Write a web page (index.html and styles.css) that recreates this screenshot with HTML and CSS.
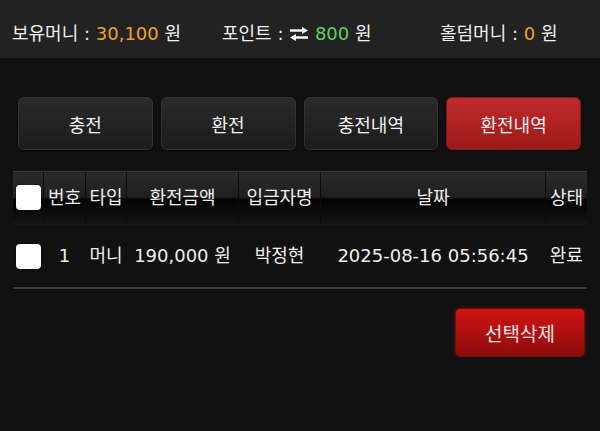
FILE: index.html
```html
<!DOCTYPE html>
<html lang="ko">
<head>
  <meta charset="UTF-8" />
  <title>환전내역</title>
  <link rel="stylesheet" href="styles.css">
</head>
<body>

<div class="topbar">
  <span class="stat stat-money">보유머니 : <em class="orange">30,100</em> 원</span>
  <span class="stat stat-point">포인트 :
    <svg class="swap" width="20" height="14" viewBox="0 0 20 14">
      <path d="M1 3.5h14" stroke="#fff" stroke-width="2.4" fill="none"/>
      <path d="M13 0l6 3.5-6 3.5z" fill="#fff"/>
      <path d="M5 10.5h14" stroke="#fff" stroke-width="2.4" fill="none"/>
      <path d="M7 7l-6 3.5 6 3.5z" fill="#fff"/>
    </svg>
    <em class="green">800</em> 원</span>
  <span class="stat">홀덤머니 : <em class="orange">0</em> 원</span>
</div>

<div class="content">
  <div class="tabs">
    <button class="tab">충전</button>
    <button class="tab">환전</button>
    <button class="tab">충전내역</button>
    <button class="tab active">환전내역</button>
  </div>

  <table class="history">
    <thead>
      <tr>
        <th class="c-check"><span class="check"></span></th>
        <th class="c-no">번호</th>
        <th class="c-type">타입</th>
        <th class="c-amount">환전금액</th>
        <th class="c-name">입금자명</th>
        <th class="c-date">날짜</th>
        <th class="c-state">상태</th>
      </tr>
    </thead>
    <tbody>
      <tr>
        <td><span class="check"></span></td>
        <td>1</td>
        <td>머니</td>
        <td>190,000 원</td>
        <td>박정현</td>
        <td>2025-08-16 05:56:45</td>
        <td>완료</td>
      </tr>
    </tbody>
  </table>

  <div class="actions">
    <button class="btn-delete">선택삭제</button>
  </div>
</div>

</body>
</html>
```

FILE: styles.css
```css
body {
  margin: 0;
  background: #111111;
  color: #eeeeee;
  font-family: "DejaVu Sans", "Noto Sans CJK KR", sans-serif;
  font-size: 18px;
}

.topbar {
  display: flex;
  align-items: center;
  height: 52px;
  padding: 6px 0 0 12px;
  background: #222222;
  white-space: nowrap;
}

.stat em {
  font-style: normal;
}

.stat-money {
  width: 210px;
}

.stat-point {
  width: 218px;
}

.swap {
  vertical-align: -1px;
}

.orange {
  color: #f0a22e;
}

.green {
  color: #5fd35a;
}

.content {
  padding: 39px 13px 0;
}

.tabs {
  display: flex;
  gap: 8px;
  padding: 0 6px 0 5px;
}

.tab {
  flex: 1;
  height: 53px;
  font-family: inherit;
  font-size: 18px;
  color: #f0f0f0;
  background: linear-gradient(#2b2b2b, #1b1b1b);
  border: 1px solid #363230;
  border-radius: 6px;
  box-shadow: 0 1px 3px rgba(0, 0, 0, 0.6);
}

.tab.active {
  background: linear-gradient(#c22a2a, #9c1a1a);
  border-color: #7a1a1a;
}

.history {
  width: 574px;
  margin-top: 21px;
  border-collapse: collapse;
  table-layout: fixed;
  line-height: 22px;
}

.history th {
  height: 51px;
  padding: 0 0 2px;
  font-weight: normal;
  white-space: nowrap;
  border-top: 1px solid #3a3a3a;
  border-left: 1px solid #0c0c0c;
  background: linear-gradient(#2a2a2a 0, #1f1f1f 47%, #030303 50%, #0a0a0a 75%, #181818 100%);
}

.history th:first-child {
  border-left: none;
}

.history td {
  height: 62px;
  padding: 0;
  text-align: center;
  white-space: nowrap;
  border-bottom: 2px solid #3a3a3a;
}

.c-check { width: 30px; }
.c-no { width: 41px; }
.c-type { width: 40px; }
.c-amount { width: 111px; }
.c-name { width: 81px; }
.c-date { width: 224px; }

.check {
  display: inline-block;
  width: 25px;
  height: 25px;
  vertical-align: middle;
  background: #ffffff;
  border-radius: 4px;
  box-shadow: 0 0 2px rgba(0, 0, 0, 0.8);
}

.actions {
  display: flex;
  justify-content: flex-end;
  padding-right: 2px;
  margin-top: 19px;
}

.btn-delete {
  width: 130px;
  height: 49px;
  font-family: inherit;
  font-size: 19px;
  color: #f4e4e4;
  background: linear-gradient(#d01414, #8e0c0c);
  border: 1px solid #6a0e0e;
  border-radius: 5px;
  box-shadow: 0 0 4px rgba(200, 30, 30, 0.35);
}
```
